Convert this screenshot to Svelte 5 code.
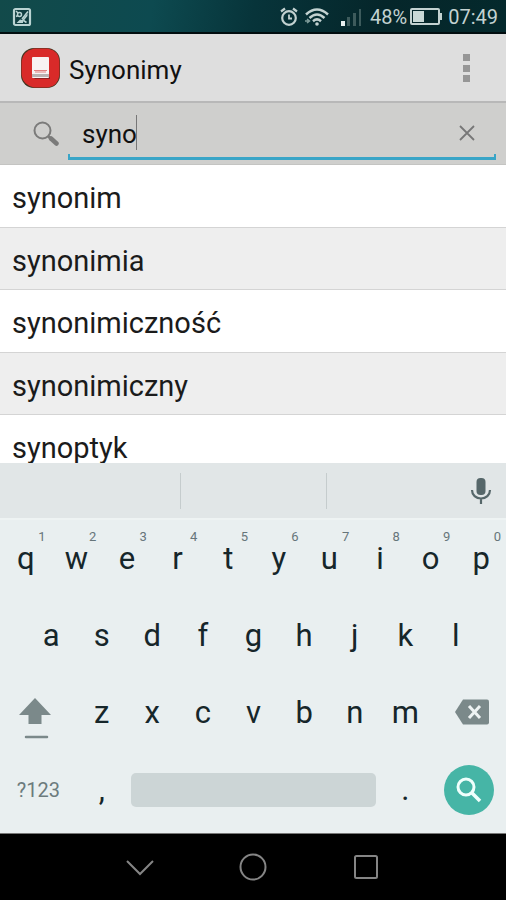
<script>
  let query = $state('syno');
  const results = ['synonim', 'synonimia', 'synonimiczność', 'synonimiczny', 'synoptyk'];
  const topRow = [...'qwertyuiop'];
  const homeRow = [...'asdfghjkl'];
  const lowRow = [...'zxcvbnm'];
</script>

<div class="screen">
  <div class="status">
    <svg class="shot" width="20" height="20" viewBox="0 0 20 20" aria-hidden="true">
      <rect x="2" y="2" width="16" height="16" rx="1.500" fill="#0f3d40" stroke="#b9d3d2" stroke-width="2.200" />
      <path d="M4.500 16L8 12.500l2 .5 5.500-6.500v2.500L11 14.500V16z" fill="#b9d3d2" />
      <path d="M10 12L16 4.500M11.500 13.500l3 2" stroke="#b9d3d2" stroke-width="1.600" />
      <circle cx="7.500" cy="7.500" r="2" fill="none" stroke="#b9d3d2" stroke-width="1.500" />
      <path d="M4 4l2 2M4 9.500l2-1" stroke="#b9d3d2" stroke-width="1.500" />
    </svg>
    <div class="tray">
      <svg width="18" height="20" viewBox="0 0 18 20" fill="none" stroke="#c3d2d1" aria-hidden="true">
        <circle cx="9" cy="11" r="6.800" stroke-width="2.200" />
        <path d="M9 7.500v4h3" stroke-width="1.800" />
        <path d="M1 4.500L5 1.500M17 4.500L13 1.500" stroke-width="2.200" />
      </svg>
      <svg class="wifi" width="26" height="20" viewBox="0 0 26 20" fill="none" stroke="#c3d2d1" stroke-width="2.500" aria-hidden="true">
        <path d="M2 7.500Q13-2.500 24 7.500" />
        <path d="M5.500 11Q13 4 20.500 11" />
        <path d="M9 14.200Q13 10.600 17 14.200" />
        <circle cx="13" cy="17" r="1.800" fill="#c3d2d1" stroke="none" />
        <path d="M1 14h4M3 12l2.500 2L3 16" stroke="#7f9c9b" stroke-width="1.500" />
      </svg>
      <svg class="signal" width="22" height="20" viewBox="0 0 22 20" aria-hidden="true">
        <path d="M1 14h4v5H1z" fill="#e8f1f0" />
        <path d="M7 10h3v9H7zM13 6h3v13h-3zM19 2h2v17h-2z" fill="#3d5b5c" />
      </svg>
      <span class="percent">48%</span>
      <svg class="battery" width="33" height="18" viewBox="0 0 33 18" aria-hidden="true">
        <rect x="1" y="1" width="28" height="15" rx="1" fill="none" stroke="#c3d2d1" stroke-width="2" />
        <path d="M3 3h11v11H3z" fill="#c9d9d7" />
        <path d="M30 5h2v7h-2z" fill="#c3d2d1" />
      </svg>
      <time>07:49</time>
    </div>
  </div>

  <header class="bar">
    <svg class="logo" width="42" height="42" viewBox="0 0 42 42" aria-hidden="true">
      <rect x="1" y="1" width="39" height="40" rx="13" fill="#43331f" />
      <path d="M14 1.500h14Q39 4 39.500 14v14Q38 39 28 40.500H14Q3 38 1.500 28V14Q3 4 14 1.500z" fill="#d92a29" />
      <path d="M13 30h17v2H15z" fill="#8e2020" />
      <rect x="12" y="10" width="17" height="21" rx="1" fill="#f8f2f2" />
      <path d="M14 23.500h13M15 25h11" stroke="#e08080" />
      <path d="M12 27h17v3H12z" fill="#b9b1b1" />
    </svg>
    <h1>Synonimy</h1>
    <button class="more" aria-label="Więcej opcji">
      <svg width="8" height="30" viewBox="0 0 8 30"><path d="M0 1h7v7H0zM0 12h7v7H0zM0 22h7v7H0z" fill="#969696" /></svg>
    </button>
  </header>

  <form class="search" role="search" onsubmit={(e) => e.preventDefault()}>
    <svg class="glass" width="26" height="26" viewBox="0 0 26 26" fill="none" stroke="#7b7b7a" aria-hidden="true">
      <circle cx="9.500" cy="9.500" r="8" stroke-width="2" />
      <path d="M15 15l3 3" stroke-width="2.500" />
      <path d="M18 17.500l5.500 5" stroke-width="4.500" stroke-linecap="round" />
    </svg>
    <div class="field">
      <label>
        <input type="text" aria-label="Szukaj" autocomplete="off" bind:value={query} />
        <span class="caret"></span>
      </label>
      <button type="button" class="clear" aria-label="Wyczyść" onclick={() => (query = '')}>
        <svg width="16" height="16" viewBox="0 0 16 16"><path d="M1 1l14 14M15 1L1 15" stroke="#777" stroke-width="1.800" /></svg>
      </button>
    </div>
  </form>

  <ul class="results">
    {#each results as word}
      <li><a href="#{word}">{word}</a></li>
    {/each}
  </ul>

  <section class="keyboard" aria-label="Klawiatura">
    <div class="strip">
      <span></span><span></span>
      <button aria-label="Wprowadzanie głosowe">
        <svg width="22" height="28" viewBox="0 0 22 28" fill="none" stroke="#56676a">
          <rect x="6.500" y="1" width="9" height="17" rx="4" fill="#56676a" stroke="none" />
          <path d="M2 13c0 5 4 8.500 9 8.500s9-3.500 9-8.500M11 21.500V27" stroke-width="2.200" />
        </svg>
      </button>
    </div>
    <div class="row">
      {#each topRow as key, i}
        <button class="key">{key}<sup>{(i + 1) % 10}</sup></button>
      {/each}
    </div>
    <div class="row">
      {#each homeRow as key}<button class="key">{key}</button>{/each}
    </div>
    <div class="row">
      <button class="key wide" aria-label="Shift">
        <svg class="shift" width="32" height="42" viewBox="0 0 32 42">
          <path d="M16 1L32 18H22.500v9h-13v-9H0z" fill="#7b898a" />
          <path d="M7 40h21" stroke="#7b898a" stroke-width="2.500" stroke-linecap="round" />
        </svg>
      </button>
      {#each lowRow as key}<button class="key">{key}</button>{/each}
      <button class="key wide" aria-label="Usuń">
        <svg class="erase" width="34" height="26" viewBox="0 0 34 26">
          <path d="M8 0.500h24q2 0 2 2v21q0 2-2 2H8L0 13z" fill="#7b898a" />
          <path d="M14 7l11 12M25 7L14 19" stroke="#eef3f3" stroke-width="3" />
        </svg>
      </button>
    </div>
    <div class="row">
      <button class="key wide symbols">?123</button>
      <button class="key">,</button>
      <button class="key space" aria-label="Spacja"><span></span></button>
      <button class="key">.</button>
      <button class="key wide" aria-label="Szukaj">
        <span class="go">
          <svg width="26" height="26" viewBox="0 0 26 26" fill="none" stroke="#f0fffc">
            <circle cx="10" cy="10" r="8" stroke-width="3" />
            <path d="M16 16l8 8" stroke-width="3.500" />
          </svg>
        </span>
      </button>
    </div>
  </section>

  <nav>
    <button aria-label="Wstecz">
      <svg width="28" height="28" viewBox="0 0 28 28"><path d="M1 8l13 13L27 8" /></svg>
    </button>
    <button aria-label="Ekran główny">
      <svg width="28" height="28" viewBox="0 0 28 28"><circle cx="14" cy="14" r="12.500" /></svg>
    </button>
    <button aria-label="Ostatnie">
      <svg width="28" height="28" viewBox="0 0 28 28"><rect x="3" y="3" width="22" height="22" rx="1.500" /></svg>
    </button>
  </nav>
</div>

<style>
  :global(body) {
    margin: 0;
  }
  .screen {
    display: flex;
    flex-direction: column;
    height: 100vh;
    overflow: hidden;
    background: #fff;
    color: #1b1b1b;
    font-family: Roboto, 'Noto Sans', sans-serif;
  }
  .screen * {
    box-sizing: border-box;
  }
  svg {
    display: block;
    flex: none;
  }
  button {
    display: flex;
    align-items: center;
    justify-content: center;
    padding: 0;
    border: 0;
    background: none;
    color: inherit;
    font: inherit;
  }

  .status {
    display: flex;
    flex: none;
    align-items: center;
    justify-content: space-between;
    height: 34px;
    padding: 2px 8px 0 12px;
    border-bottom: 2px solid #010d0f;
    background: linear-gradient(100deg, #124a4a, #0d4a50 30%, #07343a 50%, #05262a 75%, #04292c);
    color: #c3d2d1;
    font-size: 20px;
  }
  .tray {
    display: flex;
    align-items: center;
  }
  .wifi {
    margin-left: 6px;
  }
  .signal {
    margin: 0 8px 0 10px;
  }
  .battery {
    margin: 0 5px 0 3px;
  }

  .bar {
    display: flex;
    flex: none;
    align-items: center;
    height: 69px;
    padding: 0 16px 0 20px;
    border-bottom: 2px solid #b8b8b8;
    background: #dedede;
  }
  h1 {
    flex: 1;
    margin: 0;
    padding: 4px 0 0 7px;
    color: #111;
    font-size: 26px;
    font-weight: 400;
  }
  .more {
    width: 46px;
    height: 46px;
  }

  .search {
    display: flex;
    flex: none;
    align-items: center;
    height: 62px;
    padding: 0 10px 0 33px;
    border-bottom: 1px solid #c4c4c2;
    background: #cfcfcd;
  }
  .field {
    display: flex;
    flex: 1;
    align-items: center;
    align-self: flex-end;
    height: 54px;
    margin: 0 0 4px 9px;
    padding: 2px 9px 0 14px;
    border-bottom: 3px solid #39a5c7;
    background:
      linear-gradient(#39a5c7, #39a5c7) left bottom / 2px 3px no-repeat,
      linear-gradient(#39a5c7, #39a5c7) right bottom / 2px 3px no-repeat;
  }
  label {
    display: flex;
    flex: 1;
    align-items: center;
  }
  input {
    field-sizing: content;
    min-width: 1px;
    height: 40px;
    padding: 2px 0 0;
    border: 0;
    outline: 0;
    background: none;
    color: #111;
    font: 26px Roboto, 'Noto Sans', sans-serif;
  }
  .caret {
    width: 1px;
    height: 35px;
    margin-left: -1px;
    background: #777;
  }
  .clear {
    width: 40px;
    height: 40px;
  }

  .results {
    flex: 1;
    min-height: 0;
    margin: 0;
    padding: 0;
    overflow: hidden;
    list-style: none;
  }
  li {
    height: 63px;
    border-bottom: 1px solid #d4d4d4;
  }
  li:nth-child(even) {
    height: 62px;
    background: #eee;
  }
  a {
    display: flex;
    align-items: center;
    height: 100%;
    padding: 4px 12px 0;
    color: inherit;
    font-size: 29px;
    text-decoration: none;
  }

  .keyboard {
    flex: none;
    padding-bottom: 5px;
    background: #e9eff0;
    color: #16262a;
  }
  .strip {
    display: grid;
    grid-template-columns: 181fr 146fr 179fr;
    align-items: center;
    height: 57px;
    border-bottom: 2px solid #eef3f3;
    background: #e1e6e7;
  }
  .strip span {
    height: 36px;
    border-right: 1px solid #c5cccd;
  }
  .strip button {
    justify-self: end;
    width: 50px;
    height: 50px;
  }
  .row {
    display: flex;
    justify-content: center;
    height: 77px;
  }
  .key {
    position: relative;
    width: 10%;
    padding-left: 1px;
    font-size: 31px;
  }
  .wide {
    width: 15%;
  }
  .space {
    width: 50%;
    padding: 0 4px;
  }
  .space span {
    width: 100%;
    height: 34px;
    border-radius: 5px;
    background: #ccd5d6;
  }
  sup {
    position: absolute;
    top: 9px;
    right: 5px;
    color: #66757a;
    font-size: 13px;
    line-height: 16px;
  }
  .shift {
    margin: 10px 6px 0 0;
  }
  .erase {
    margin: 0 0 2px 6px;
  }
  .symbols {
    color: #6c7b7d;
    font-size: 20px;
  }
  .go {
    display: flex;
    align-items: center;
    justify-content: center;
    width: 50px;
    height: 50px;
    border-radius: 50%;
    background: #46b5a6;
  }

  nav {
    display: flex;
    flex: none;
    justify-content: center;
    height: 67px;
    border-top: 1px solid #777;
    background: #000;
  }
  nav button {
    width: 113px;
  }
  nav svg {
    fill: none;
    stroke: #858585;
    stroke-width: 2;
  }
</style>
